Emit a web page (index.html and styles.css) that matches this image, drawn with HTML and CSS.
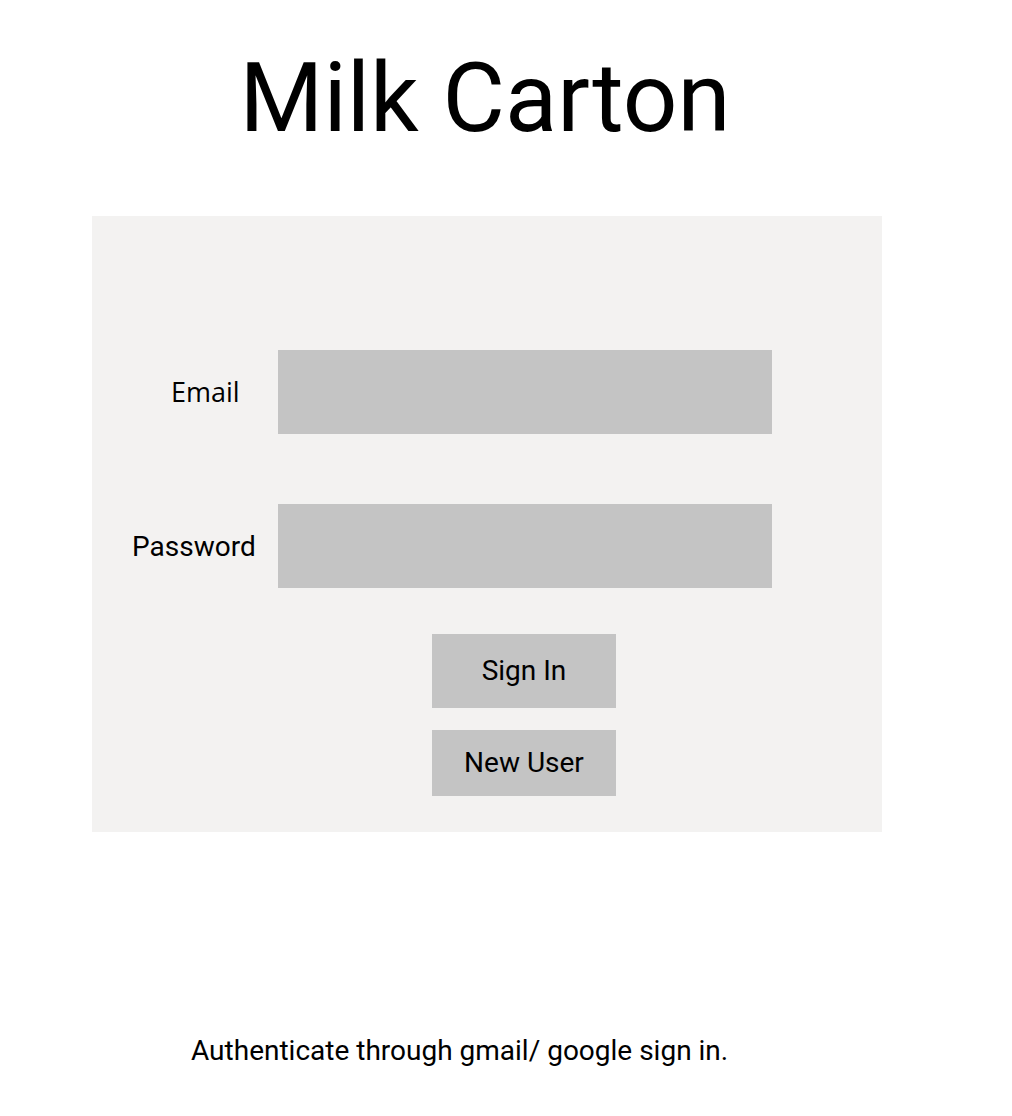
FILE: index.html
```html
<!DOCTYPE html>
<html>
<head>
<meta charset="utf-8">
<link rel="stylesheet" href="styles.css">
</head>
<body>
<div class="page">
  <h1 class="title">Milk Carton</h1>
  <div class="panel">
    <div class="row">
      <label class="label label-email">Email</label>
      <div class="field"></div>
    </div>
    <div class="row row-password">
      <label class="label label-password">Password</label>
      <div class="field"></div>
    </div>
    <div class="actions">
      <div class="btn btn-signin">Sign In</div>
      <div class="btn btn-new">New User</div>
    </div>
  </div>
  <p class="note">Authenticate through gmail/ google sign in.</p>
</div>
</body>
</html>
```

FILE: styles.css
```css
html, body {
  margin: 0;
  padding: 0;
  background: #ffffff;
}
body {
  font-family: Roboto, "Liberation Sans", sans-serif;
  color: #000;
}
.page {
  width: 1012px;
  padding-left: 92px;
  box-sizing: border-box;
}
.title {
  width: 786px;
  margin: 42px 0 0 0;
  font-weight: 400;
  font-size: 96px;
  line-height: 112px;
  text-align: center;
  height: 174px;
}
.panel {
  width: 790px;
  height: 616px;
  box-sizing: border-box;
  background: #f3f2f1;
  padding-top: 134px;
  display: flex;
  flex-direction: column;
}
.row {
  display: flex;
  align-items: center;
  height: 84px;
}
.row-password {
  margin-top: 70px;
}
.label {
  width: 186px;
  box-sizing: border-box;
  font-size: 28px;
}
.label-email {
  font-family: "Open Sans", sans-serif;
  font-size: 27px;
  padding-left: 79px;
  padding-bottom: 2px;
}
.label-password {
  padding-left: 40px;
}
.field {
  width: 494px;
  height: 84px;
  background: #c4c4c4;
}
.actions {
  margin-top: 46px;
  margin-left: 340px;
  display: flex;
  flex-direction: column;
  gap: 22px;
  width: 184px;
}
.btn {
  background: #c4c4c4;
  display: flex;
  align-items: center;
  justify-content: center;
  font-size: 28px;
  box-sizing: border-box;
  padding-bottom: 2px;
}
.btn-signin {
  height: 74px;
}
.btn-new {
  height: 66px;
}
.note {
  margin: 204px 0 0 99px;
  font-size: 28px;
  line-height: 30px;
}
```
